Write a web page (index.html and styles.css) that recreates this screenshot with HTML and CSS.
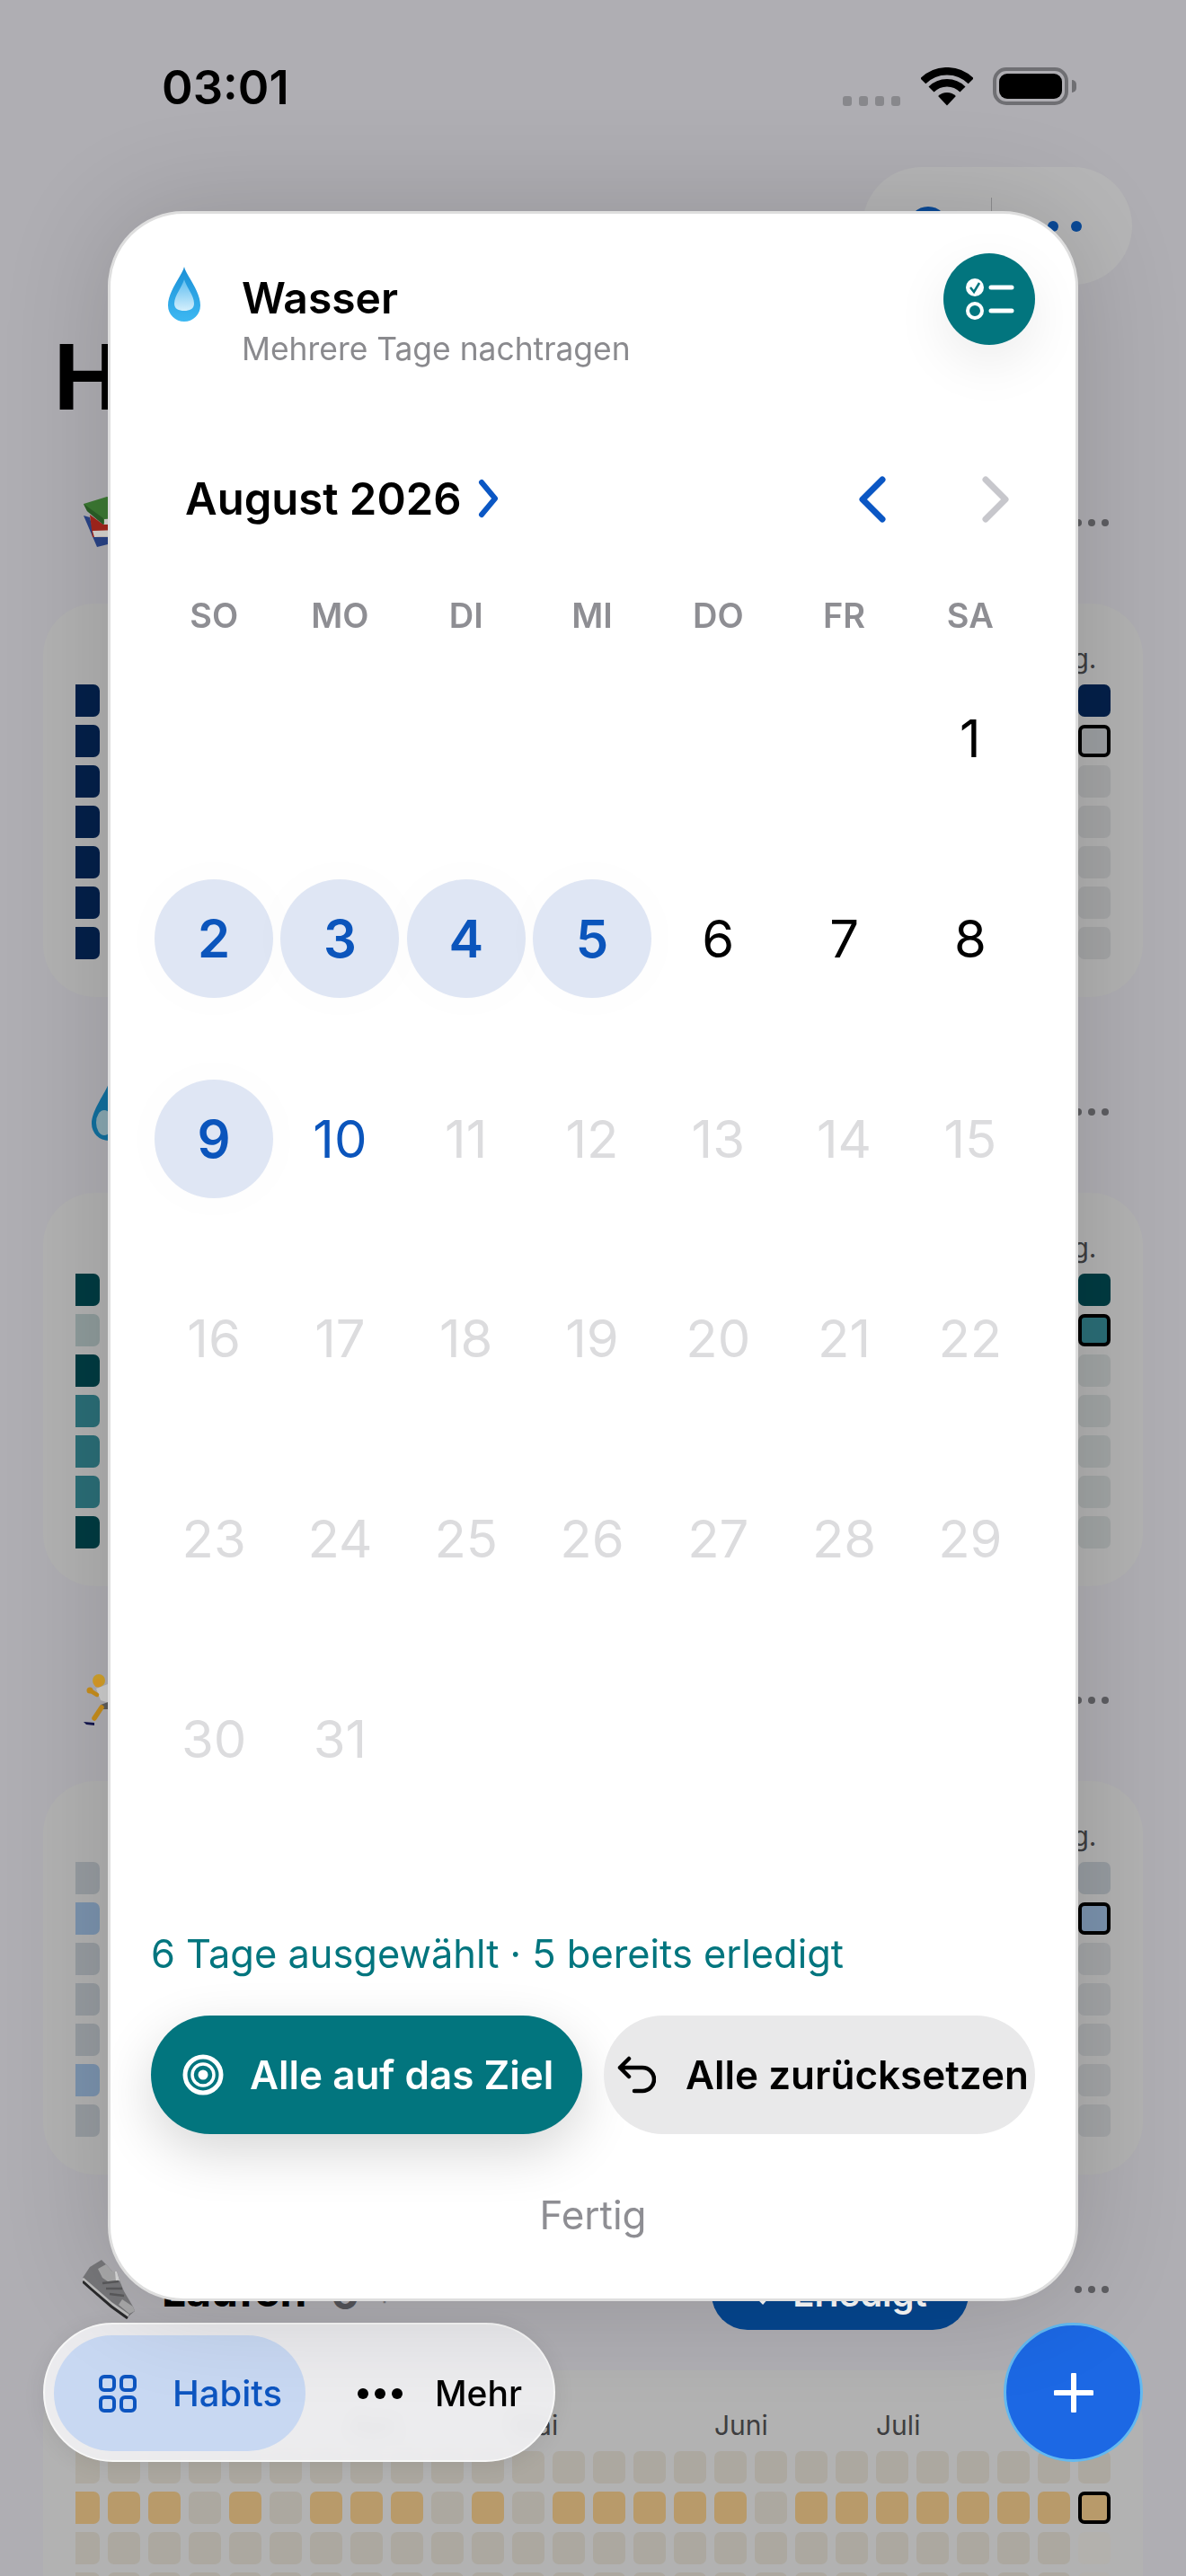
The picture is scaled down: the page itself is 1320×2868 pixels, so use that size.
FILE: index.html
```html
<!DOCTYPE html>
<html lang="de">
<head>
    <title>Habits</title>
    <meta http-equiv="Content-Type" content="text/html; charset=utf-8" />
    <link rel="stylesheet" href="styles.css">
</head>

<body>
<div class="page">

    <!-- Statusleiste -->
    <div class="status-bar">
        <span class="time">03:01</span>
        <div class="status-icons">
            <span class="signal"><i></i><i></i><i></i><i></i></span>
            <svg class="wifi" width="58" height="43" viewBox="0 0 58 43">
                <path d="M2.3 15.3 A37.7 37.7 0 0 1 55.7 15.3" fill="none" stroke="#000" stroke-width="8.5"/>
                <path d="M11.5 24.5 A24.7 24.7 0 0 1 46.5 24.5" fill="none" stroke="#000" stroke-width="8.5"/>
                <path d="M29 42.5 L19.1 32.1 A14 14 0 0 1 38.9 32.1 Z" fill="#000"/>
            </svg>
            <span class="battery"><i></i></span>
        </div>
    </div>

    <div class="top-actions">
        <div class="search-pill">
            <svg width="46" height="46" viewBox="0 0 46 46"><circle cx="23" cy="23" r="19" fill="none" stroke="#0a4a98" stroke-width="6"/></svg>
            <span class="pill-line"></span>
            <span class="pill-dots"><i></i><i></i><i></i></span>
        </div>
    </div>

    <h1>Habits</h1>

    <!-- Habits im Hintergrund -->
    <section class="habit">
        <div class="habit-head">
            <svg class="habit-icon" width="60" height="60" viewBox="0 0 60 60">
                <path d="M1 22 L16 57 L28 54 L28 46 L13 46 L8 24Z" fill="#2a4488"/>
                <path d="M8 21 L23 32 L40 32 L40 44 L11 46Z" fill="#a5261c"/>
                <path d="M11 39 L40 38 L40 45 L13 46Z" fill="#d9d7d2"/>
                <path d="M1 9 L27 1 L50 8 L23 32 L5 17Z" fill="#3c7a33"/>
                <path d="M1 9 L23 25 L23 32 L5 17Z" fill="#2c5f28"/>
                <path d="M24 26 L40 25 L40 31 L24 32Z" fill="#d9d7d2"/>
            </svg>
            <span class="habit-more"><i></i><i></i><i></i></span>
        </div>
        <div class="card navy">
            <div class="months"><span class="m24">Aug.</span></div>
            <div class="heat"><div class="heat-grid" data-left="ddddddd" data-right="dtfffff"></div></div>
        </div>
    </section>

    <section class="habit">
        <div class="habit-head">
            <svg class="habit-icon" width="60" height="64" viewBox="0 0 60 64">
                <path d="M29 0 C32 10 48 30 48 45 A19 19 0 0 1 10 45 C10 30 26 10 29 0Z" fill="#12709f"/>
                <ellipse cx="24" cy="44" rx="9" ry="14" fill="#8aa9b3"/>
            </svg>
            <span class="habit-more"><i></i><i></i><i></i></span>
        </div>
        <div class="card teal">
            <div class="months"><span class="m24">Aug.</span></div>
            <div class="heat"><div class="heat-grid" data-left="dldmmmd" data-right="dsfffff"></div></div>
        </div>
    </section>

    <section class="habit">
        <div class="habit-head">
            <svg class="habit-icon" width="60" height="62" viewBox="0 0 60 62">
                <path d="M15 18 L28 13 L40 20 L36 36 L20 31Z" fill="#cfcfcf"/>
                <path d="M20 36 L34 31 L34 41 L22 41Z" fill="#5e5e5e"/>
                <path d="M21 39 L13 51" fill="none" stroke="#c98f1c" stroke-width="5.5" stroke-linecap="round"/>
                <path d="M8 20 L16 25" fill="none" stroke="#c98f1c" stroke-width="4.5" stroke-linecap="round"/>
                <circle cx="8" cy="20" r="3.5" fill="#c98f1c"/>
                <path d="M1 55 L13 56 L13 59 L4 58Z" fill="#15174f"/>
                <circle cx="18" cy="9" r="7" fill="#d3a32b"/>
                <circle cx="17" cy="12" r="4.5" fill="#dc9c26"/>
            </svg>
            <span class="habit-more"><i></i><i></i><i></i></span>
        </div>
        <div class="card blue">
            <div class="months"><span class="m24">Aug.</span></div>
            <div class="heat"><div class="heat-grid" data-left="edeeede" data-right="esfffff"></div></div>
        </div>
    </section>

    <section class="habit">
        <div class="habit-head">
            <svg class="habit-icon" width="60" height="66" viewBox="0 0 60 66">
                <path d="M0 20 L8 8 L21 0 L26 5 L33 13 L38 13 L41 23 L46 35 L56 52 L58 57 L51 63 L31 48 L8 28Z" fill="#77777a"/>
                <path d="M17 10 L26 5 L33 13 L38 13 L41 23 L28 24 L22 20Z" fill="#a9a9aa"/>
                <path d="M36 13 L38 13 L41 23 L37 24Z" fill="#dadada"/>
                <path d="M22 26 L40 24 M26 32 L44 32 M30 38 L46 40" stroke="#5a5a5c" stroke-width="2.5"/>
                <path d="M44 44 L56 52 L58 57 L52 60 L40 50Z" fill="#a8a8a9"/>
                <path d="M0 21 L8 28 L31 48 L51 62" fill="none" stroke="#bdbdbd" stroke-width="3"/>
                <path d="M0 24 L10 33 L32 52 L50 65" fill="none" stroke="#2a2a2c" stroke-width="3"/>
            </svg>
            <span class="habit-title">Laufen</span>
            <span class="habit-count">0</span>
            <span class="habit-plus">+</span>
            <span class="habit-btn"><svg width="30" height="24" viewBox="0 0 30 24"><path d="M3 13 L11 21 L27 3" fill="none" stroke="#fff" stroke-width="4"/></svg>Erledigt</span>
            <span class="habit-more"><i></i><i></i><i></i></span>
        </div>
        <div class="card orange">
            <div class="months"><span class="m2">März</span><span class="m7">Apr.</span><span class="m11">Mai</span><span class="m16">Juni</span><span class="m20">Juli</span><span class="m24">Aug.</span></div>
            <div class="heat"><div class="heat-grid"
                data-rows="eeeeeeeeeeeeeeeeeeeeeeeeee,dddededddededddddedddddddt,eeeeeeeeeeeeeeeeeeeeeeeeef,eeeeeeeeeeeeeeeeeeeeeeeeef,eeeeeeeeeeeeeeeeeeeeeeeeef,eeeeeeeeeeeeeeeeeeeeeeeeef,eeeeeeeeeeeeeeeeeeeeeeeeef"></div></div>
        </div>
    </section>

    <!-- Untere Navigation -->
    <nav class="tab-bar">
        <div class="tab tab-active">
            <svg width="42" height="42" viewBox="0 0 42 42" fill="none" stroke="#0d55c0" stroke-width="4">
                <rect x="2" y="2" width="15" height="15" rx="4"/><rect x="25" y="2" width="15" height="15" rx="4"/>
                <rect x="2" y="25" width="15" height="15" rx="4"/><rect x="25" y="25" width="15" height="15" rx="4"/>
            </svg>
            <span>Habits</span>
        </div>
        <div class="tab tab-more">
            <svg width="50" height="14" viewBox="0 0 50 14" fill="#000"><circle cx="6" cy="7" r="6"/><circle cx="25" cy="7" r="6"/><circle cx="44" cy="7" r="6"/></svg>
            <span>Mehr</span>
        </div>
    </nav>
    <div class="fab">
        <svg width="44" height="44" viewBox="0 0 44 44"><path d="M22 2 V42 M2 22 H42" stroke="#fff" stroke-width="6" stroke-linecap="round"/></svg>
    </div>

    <!-- Dialog: Mehrere Tage nachtragen -->
    <div class="sheet">
        <div class="sheet-head">
            <svg class="sheet-drop" width="38" height="62" viewBox="0 0 38 62">
                <defs>
                    <linearGradient id="dropfill" x1="0" y1="0" x2="0" y2="1">
                        <stop offset="0" stop-color="#1a8fd6"/><stop offset="1" stop-color="#3db8f2"/>
                    </linearGradient>
                    <linearGradient id="dropshine" x1="0" y1="0" x2="0" y2="1">
                        <stop offset="0" stop-color="#5dbdf0"/><stop offset="1" stop-color="#d4effc"/>
                    </linearGradient>
                </defs>
                <path d="M19 0 C21 9 37 27 37 43 A18 18 0 0 1 1 43 C1 27 17 9 19 0Z" fill="url(#dropfill)"/>
                <path d="M19 14 C21 22 30 32 30 41 C30 47 25 49 19 49 C13 49 8 47 8 41 C8 32 17 22 19 14Z" fill="url(#dropshine)"/>
            </svg>
            <div class="sheet-titles">
                <div class="sheet-title">Wasser</div>
                <div class="sheet-sub">Mehrere Tage nachtragen</div>
            </div>
            <div class="list-btn">
                <svg width="102" height="102" viewBox="0 0 102 102">
                    <circle cx="35" cy="38" r="10" fill="#fff"/>
                    <path d="M30 38 L34 43 L40 33" fill="none" stroke="#02757e" stroke-width="2.5"/>
                    <path d="M53 38 H76 M53 64 H76" stroke="#fff" stroke-width="5" stroke-linecap="round"/>
                    <circle cx="35" cy="64" r="8" fill="none" stroke="#fff" stroke-width="4"/>
                </svg>
            </div>
        </div>

        <div class="month-row">
            <span class="month-name">August 2026</span>
            <svg class="month-open" width="24" height="46" viewBox="0 0 24 46"><path d="M5 5 L20 23 L5 41" fill="none" stroke="#0b57c4" stroke-width="6" stroke-linecap="round" stroke-linejoin="round"/></svg>
            <svg class="month-prev" width="34" height="58" viewBox="0 0 34 58"><path d="M28 7 L6 29 L28 51" fill="none" stroke="#0b57c4" stroke-width="7" stroke-linecap="round" stroke-linejoin="round"/></svg>
            <svg class="month-next" width="34" height="58" viewBox="0 0 34 58"><path d="M6 7 L28 29 L6 51" fill="none" stroke="#c7c7cc" stroke-width="7" stroke-linecap="round" stroke-linejoin="round"/></svg>
        </div>

        <div class="weekdays">
            <span>SO</span><span>MO</span><span>DI</span><span>MI</span><span>DO</span><span>FR</span><span>SA</span>
        </div>

        <div class="days">
            <span class="day sat">1</span>
            <span class="day sel">2</span><span class="day sel">3</span><span class="day sel">4</span><span class="day sel">5</span><span class="day">6</span><span class="day">7</span><span class="day">8</span>
            <span class="day sel">9</span><span class="day now">10</span><span class="day off">11</span><span class="day off">12</span><span class="day off">13</span><span class="day off">14</span><span class="day off">15</span>
            <span class="day off">16</span><span class="day off">17</span><span class="day off">18</span><span class="day off">19</span><span class="day off">20</span><span class="day off">21</span><span class="day off">22</span>
            <span class="day off">23</span><span class="day off">24</span><span class="day off">25</span><span class="day off">26</span><span class="day off">27</span><span class="day off">28</span><span class="day off">29</span>
            <span class="day off">30</span><span class="day off">31</span>
        </div>

        <div class="sheet-foot">
            <p class="summary">6 Tage ausgewählt · 5 bereits erledigt</p>
            <div class="actions">
                <button class="btn btn-goal">
                    <svg width="46" height="46" viewBox="0 0 46 46" fill="none" stroke="#fff">
                        <circle cx="23" cy="23" r="20" stroke-width="5"/><circle cx="23" cy="23" r="12" stroke-width="3.5"/><circle cx="23" cy="23" r="5.5" fill="#fff" stroke="none"/>
                    </svg>
                    Alle auf das Ziel
                </button>
                <button class="btn btn-reset">
                    <svg width="44" height="42" viewBox="0 0 44 42" fill="none" stroke="#000" stroke-width="4.5" stroke-linecap="round" stroke-linejoin="round">
                        <path d="M14 3 L4 13 L14 23 M4 13 H29 A13 13 0 0 1 29 39 H20"/>
                    </svg>
                    Alle zurücksetzen
                </button>
            </div>
            <div class="done">Fertig</div>
        </div>
    </div>
</div>

<script src="app.js"></script>
</body>
</html>
```
FILE: styles.css
```css
* {
    box-sizing: border-box;
}

body {
    margin: 0;
    font-family: Inter, "Liberation Sans", sans-serif;
    color: #000;
}

.page {
    position: relative;
    width: 1320px;
    height: 2868px;
    overflow: hidden;
    background-color: #afaeb3;
}

/* status bar */
.status-bar {
    height: 186px;
    padding: 70px 120px 0 180px;
    display: flex;
    justify-content: space-between;
    align-items: flex-start;
}

.time {
    font-size: 52.5px;
    font-weight: 600;
    line-height: 54px;
}

.status-icons {
    display: flex;
    align-items: flex-start;
    padding-top: 5px;
}

.signal {
    display: flex;
    gap: 7.5px;
    margin: 32px 23px 0 0;
}

.signal i {
    width: 10.5px;
    height: 10.5px;
    border-radius: 3px;
    background-color: #88888c;
}

.wifi {
    margin-right: 22px;
}

.battery {
    position: relative;
    width: 84px;
    height: 42px;
    border: 4px solid #6f6f73;
    border-radius: 15px;
    padding: 3px;
    margin-right: 11px;
}

.battery i {
    display: block;
    height: 100%;
    background-color: #000;
    border-radius: 9px;
}

.battery::after {
    content: "";
    position: absolute;
    right: -13px;
    top: 10px;
    width: 5px;
    height: 14px;
    background-color: #6f6f73;
    border-radius: 0 5px 5px 0;
}

/* header */
.top-actions {
    display: flex;
    justify-content: flex-end;
    padding-right: 60px;
}

.search-pill {
    width: 300px;
    height: 131px;
    border-radius: 66px;
    background-color: #b6b6b7;
    display: flex;
    align-items: center;
    padding-left: 50px;
}

.pill-line {
    width: 1px;
    height: 64px;
    background-color: #8e8e90;
    margin-left: 47px;
}

.pill-dots {
    display: flex;
    gap: 14px;
    margin-left: 36px;
}

.pill-dots i {
    width: 12px;
    height: 12px;
    border-radius: 50%;
    background-color: #0a4a98;
}

h1 {
    margin: 43px 0 42px 60px;
    width: 400px;
    font-size: 100px;
    line-height: 120px;
    font-weight: 700;
}

/* habits behind the sheet */
.habit {
    margin: 0 48px 67.5px;
}

.habit-head {
    height: 120px;
    margin-bottom: 30px;
    padding-left: 44px;
    display: flex;
    align-items: center;
}

.habit-icon {
    flex: none;
    margin-right: 28px;
}

.habit-title {
    font-size: 48px;
    font-weight: 700;
    width: 188px;
    padding-top: 4px;
}

.habit-count {
    font-size: 48px;
    font-weight: 700;
    color: #55555a;
    width: 50px;
    padding-top: 10px;
}

.habit-plus {
    width: 24px;
    font-size: 30px;
    color: #77777b;
    padding-top: 12px;
}

.habit-btn {
    margin-left: 350px;
    width: 286px;
    height: 90px;
    border-radius: 40px;
    background-color: #05468f;
    color: #fff;
    font-size: 40px;
    font-weight: 600;
    display: flex;
    justify-content: center;
    align-items: center;
    gap: 14px;
    padding-top: 10px;
}

.habit-more {
    display: flex;
    gap: 7px;
    margin: 0 40px 0 auto;
    width: 36px;
}

.habit-more i {
    width: 8px;
    height: 8px;
    flex: none;
    border-radius: 50%;
    background-color: #5e5e62;
}

.card {
    height: 438px;
    padding: 41px 36px 0;
    border-radius: 58px;
    background-color: #b2b2b2;
}

.months {
    display: grid;
    grid-template-columns: repeat(26, 36px);
    column-gap: 9px;
    height: 40px;
    margin: 0 0 9px -9px;
    font-size: 30px;
    line-height: 40px;
    color: #3e3e40;
    white-space: nowrap;
}

.m2 { grid-column: 3; }
.m7 { grid-column: 8; }
.m11 { grid-column: 12; }
.m16 { grid-column: 17; }
.m20 { grid-column: 21; }
.m24 { grid-column: 25; }

.heat {
    overflow: hidden;
}

.heat-grid {
    display: grid;
    grid-template-columns: repeat(26, 36px);
    grid-auto-rows: 36px;
    gap: 9px;
    margin-left: -9px;
}

.cell {
    border-radius: 7px;
}

.cell.today {
    border: 4px solid #000;
}

.navy .e, .navy .s, .navy .t { background-color: #9c9fa2; }
.navy .f { background-color: #a4a5a6; }
.navy .d { background-color: #04204a; }

.teal .e, .teal .l { background-color: #8f9c9c; }
.teal .f { background-color: #a1a5a5; }
.teal .d { background-color: #003b42; }
.teal .m, .teal .s { background-color: #2b6e77; }

.blue .e { background-color: #979ca1; }
.blue .f { background-color: #a3a5a7; }
.blue .d, .blue .s { background-color: #7b93ae; }

.orange .e { background-color: #aca8a0; }
.orange .f { background-color: #b3b1ad; }
.orange .d, .orange .t { background-color: #b89a6a; }

/* bottom navigation */
.tab-bar {
    position: absolute;
    left: 48px;
    top: 2586px;
    width: 570px;
    height: 155px;
    padding: 12px;
    border: 2px solid #f8f8f8;
    border-radius: 78px;
    background-color: rgba(240, 240, 242, 0.93);
    backdrop-filter: blur(8px);
    display: flex;
    font-size: 40px;
    box-shadow: 0 4px 24px rgba(0, 0, 0, 0.08);
}

.tab {
    display: flex;
    align-items: center;
    height: 129px;
    font-weight: 500;
}

.tab-active {
    width: 280px;
    padding-left: 50px;
    gap: 40px;
    margin-left: -2px;
    border-radius: 65px;
    background-color: #c8d8f2;
    color: #0d55c0;
}

.tab-more {
    padding-left: 58px;
    gap: 36px;
    font-size: 39px;
}

.fab {
    position: absolute;
    left: 1117px;
    top: 2586px;
    width: 155px;
    height: 155px;
    border: 3px solid #63b9f0;
    border-radius: 50%;
    background-color: #1c68e4;
    display: flex;
    justify-content: center;
    align-items: center;
}

/* sheet */
.sheet {
    position: absolute;
    left: 120px;
    top: 235px;
    width: 1080px;
    height: 2327px;
    padding: 44px 45px 63px;
    border: 3px solid #dedede;
    border-radius: 84px;
    background-color: #fff;
    box-shadow: 0 0 120px rgba(0, 0, 0, 0.16);
    display: flex;
    flex-direction: column;
}

.sheet-head {
    display: flex;
    align-items: flex-start;
    padding-left: 18px;
    height: 102px;
}

.sheet-drop {
    flex: none;
    margin: 15px 45px 0 0;
}

.sheet-titles {
    flex: 1;
    padding-top: 20px;
}

.sheet-title {
    font-size: 48px;
    font-weight: 600;
    line-height: 60px;
}

.sheet-sub {
    font-size: 35.4px;
    line-height: 40px;
    color: #8a8a8e;
    margin-top: 7px;
}

.list-btn {
    flex: none;
    width: 102px;
    height: 102px;
    border-radius: 50%;
    background-color: #02757e;
    box-shadow: 0 20px 60px rgba(0, 0, 0, 0.08);
}

.month-row {
    display: flex;
    align-items: center;
    height: 60px;
    margin-top: 141px;
    padding-left: 38px;
}

.month-name {
    font-size: 49px;
    font-weight: 600;
}

.month-open {
    margin-left: 17px;
}

.month-prev {
    margin: 2px 0 0 auto;
}

.month-next {
    margin: 2px 27px 0 103px;
}

.weekdays {
    display: grid;
    grid-template-columns: repeat(7, 1fr);
    height: 40px;
    margin: 79.5px 2px 0 0;
    text-align: center;
    font-size: 38px;
    font-weight: 600;
    line-height: 40px;
    color: #8e8e93;
}

.days {
    display: grid;
    grid-template-columns: repeat(7, 1fr);
    grid-auto-rows: 132px;
    row-gap: 90.8px;
    margin: 51.5px 2px 0 0;
    justify-items: center;
}

.day {
    width: 132px;
    height: 132px;
    border-radius: 50%;
    display: flex;
    justify-content: center;
    align-items: center;
    font-size: 58px;
}

.sat {
    grid-column: 7;
}

.sel {
    background-color: #dfe6f4;
    color: #0b55bc;
    font-weight: 600;
    box-shadow: 0 0 60px rgba(0, 0, 0, 0.02);
}

.now {
    color: #0b55bc;
}

.off {
    color: #dcdcde;
}

.sheet-foot {
    margin-top: auto;
}

.summary {
    margin: 0 0 44px;
    font-size: 43.4px;
    line-height: 50px;
    color: #02757e;
}

.actions {
    display: flex;
    justify-content: space-between;
}

.btn {
    width: 480px;
    height: 132px;
    border: none;
    border-radius: 66px;
    display: flex;
    align-items: center;
    font-family: inherit;
    font-size: 44px;
    font-weight: 600;
    white-space: nowrap;
}

.btn-goal {
    padding: 0 0 0 35px;
    gap: 29px;
    background-color: #02757e;
    color: #fff;
    box-shadow: 0 20px 60px rgba(0, 0, 0, 0.16);
}

.btn-reset {
    padding: 0 0 0 14px;
    gap: 33px;
    background-color: #e9e9ea;
    color: #000;
}

.done {
    margin-top: 60px;
    text-align: center;
    font-size: 44px;
    line-height: 60px;
    color: #8e8e93;
}
```
FILE: app.js
```js
// Baut die Kacheln der Habit-Karten
var grids = document.querySelectorAll('.heat-grid');

function cellState(grid, row, col) {
    if (grid.dataset.rows) {
        return grid.dataset.rows.split(',')[row][col] || 'e';
    }
    if (col == 0) return grid.dataset.left[row];
    if (col == 25) return grid.dataset.right[row];
    return 'e';
}

for (var i = 0; i < grids.length; i++) {
    for (var row = 0; row < 7; row++) {
        for (var col = 0; col < 26; col++) {
            var state = cellState(grids[i], row, col);
            var cell = document.createElement('div');
            cell.className = 'cell ' + state;
            if (state == 't' || state == 's') cell.className += ' today';
            grids[i].appendChild(cell);
        }
    }
}
```
